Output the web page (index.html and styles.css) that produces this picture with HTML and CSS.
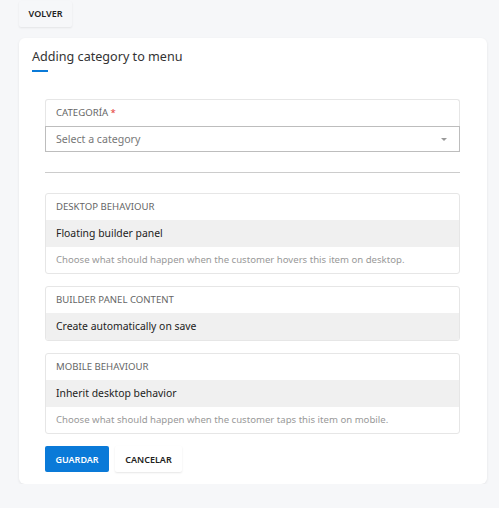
FILE: index.html
```html
<!DOCTYPE html>
<html lang="es">
<head>
    <meta charset="UTF-8">
    <meta name="viewport" content="width=device-width, initial-scale=1.0">
    <title>Adding category to menu</title>
    <link rel="stylesheet" href="styles.css">
</head>
<body>
    <div class="topbar">
        <button class="btn btn-back" type="button">VOLVER</button>
    </div>

    <div class="card">
        <h1 class="card-title">Adding category to menu</h1>

        <form class="card-body" id="categoryForm">
            <div class="field">
                <div class="field-label">CATEGORÍA <span class="req">*</span></div>
                <div class="select">
                    <span class="placeholder">Select a category</span>
                    <span class="caret"></span>
                </div>
            </div>

            <hr class="divider">

            <div class="field">
                <div class="field-label">DESKTOP BEHAVIOUR</div>
                <div class="field-value">Floating builder panel</div>
                <div class="field-help">Choose what should happen when the customer hovers this item on desktop.</div>
            </div>

            <div class="field">
                <div class="field-label">BUILDER PANEL CONTENT</div>
                <div class="field-value">Create automatically on save</div>
            </div>

            <div class="field">
                <div class="field-label">MOBILE BEHAVIOUR</div>
                <div class="field-value">Inherit desktop behavior</div>
                <div class="field-help">Choose what should happen when the customer taps this item on mobile.</div>
            </div>

            <div class="actions">
                <button class="btn btn-primary" type="submit">GUARDAR</button>
                <button class="btn btn-plain" type="button">CANCELAR</button>
            </div>
        </form>
    </div>
</body>
</html>
```

FILE: styles.css
```css
body {
    margin: 0;
    background: #f6f7f9;
    font-family: "Noto Sans", "Open Sans", sans-serif;
    color: #222;
}
.topbar {
    padding: 0 19px;
    height: 38px;
}
.btn {
    font-family: inherit;
    font-size: 9px;
    font-weight: 600;
    border: none;
    border-radius: 2px;
    cursor: pointer;
    height: 26px;
}
.btn-back {
    width: 53px;
    background: #f6f7f9;
    color: #222;
    box-shadow: 0 1px 2px rgba(0, 0, 0, 0.08);
}
.card {
    margin: 0 12px 0 19px;
    background: #fff;
    border-radius: 6px;
    box-shadow: 0 1px 3px rgba(0, 0, 0, 0.08);
    padding-bottom: 12px;
}
.card-title {
    margin: 0;
    padding: 9px 14px 0 13px;
    font-size: 12.6px;
    font-weight: 400;
    line-height: 20px;
    color: #333;
}
.card-title::after {
    content: "";
    display: block;
    width: 16px;
    height: 2px;
    margin-top: 3px;
    background: #0a7ad8;
}
.card-body {
    padding: 27px 27px 0 26px;
}
.field {
    border: 1px solid #e6e6e6;
    border-radius: 3px;
    margin-bottom: 12px;
    overflow: hidden;
}
.field-label {
    height: 26px;
    line-height: 26px;
    padding: 0 10px;
    font-size: 9.6px;
    color: #666;
}
.req {
    color: #e53935;
}
.select {
    display: flex;
    align-items: center;
    justify-content: space-between;
    height: 24px;
    padding: 0 10px;
    border: 1px solid #bdbdbd;
    margin: 0 -1px -1px -1px;
}
.placeholder {
    font-size: 10.6px;
    color: #777;
}
.caret {
    width: 0;
    height: 0;
    border-left: 3px solid transparent;
    border-right: 3px solid transparent;
    border-top: 3px solid #999;
    margin-right: 2px;
}
.field:first-child {
    overflow: visible;
    border-bottom: none;
    margin-bottom: 0;
}
.divider {
    border: none;
    border-top: 1px solid #ccc;
    margin: 21px 0 20px 0;
}
.field-value {
    height: 27px;
    line-height: 27px;
    padding: 0 10px;
    background: #f0f0f0;
    font-size: 10.4px;
    color: #222;
}
.field-help {
    height: 26px;
    line-height: 26px;
    padding: 0 10px;
    font-size: 9.6px;
    color: #999;
}
.actions {
    display: flex;
    gap: 6px;
}
.btn-primary {
    width: 64px;
    background: #0a7ad8;
    color: #fff;
}
.btn-plain {
    width: 67px;
    background: #fff;
    color: #222;
    box-shadow: 0 1px 2px rgba(0, 0, 0, 0.1);
}
```
